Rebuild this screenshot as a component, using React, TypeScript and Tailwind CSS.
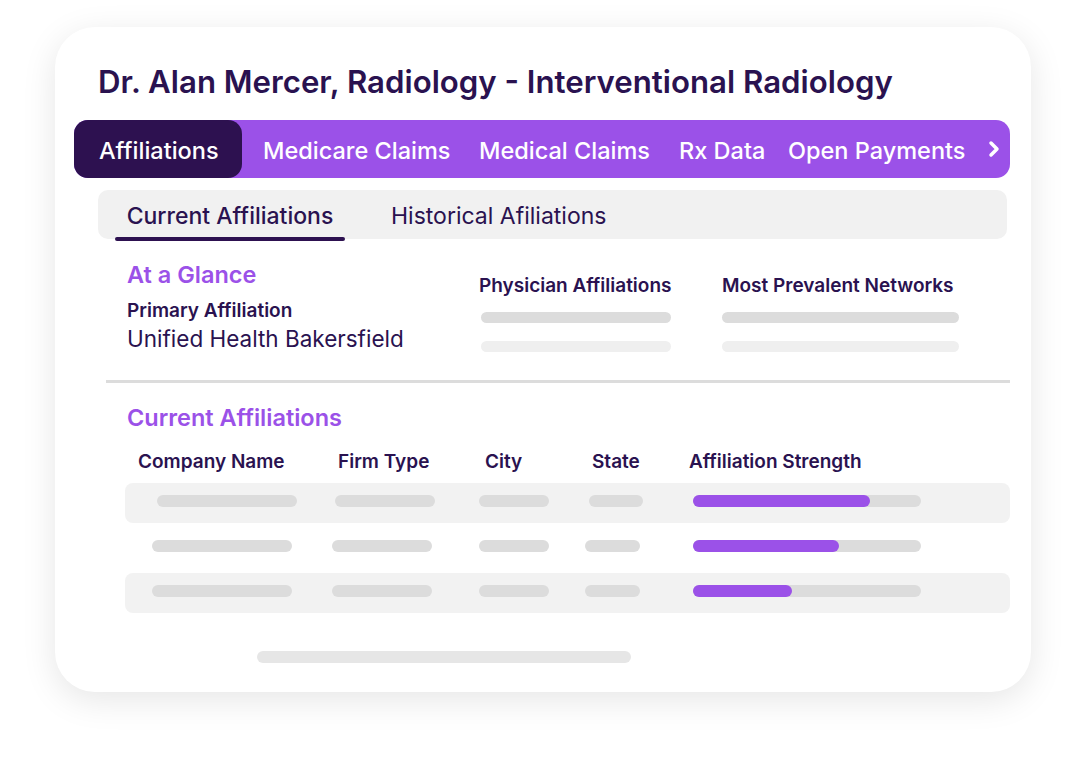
import { ChevronRight } from 'lucide-react';

const font = { fontFamily: 'Inter, "Noto Sans", sans-serif' };

const Bar = ({ w, light }: { w: number; light?: boolean }) => (
  <div className={`h-[11px] rounded-full ${light ? 'bg-[#efefef]' : 'bg-[#dcdcdc]'}`} style={{ width: w }} />
);

const rows = [
  { shade: true, company: [32, 140], firm: [210, 100], city: [354, 70], state: [464, 54], fill: 177 },
  { shade: false, company: [27, 140], firm: [207, 100], city: [354, 70], state: [460, 55], fill: 146 },
  { shade: true, company: [27, 140], firm: [207, 100], city: [354, 70], state: [460, 55], fill: 99 },
];

const App = () => {
  return (
    <div className="min-h-screen bg-white pt-[27px] pl-[55px]" style={font}>
      {/* Card */}
      <div className="w-[976px] h-[665px] bg-white rounded-[40px] shadow-[0_8px_34px_rgba(0,0,0,0.1)] pt-[35px]">
        <h1 className="ml-[43px] text-[31.2px] leading-[40px] font-semibold text-[#2a1250]">
          Dr. Alan Mercer, Radiology - Interventional Radiology
        </h1>

        {/* Main tabs */}
        <div className="ml-[19px] mt-[18px] w-[936px] h-[58px] bg-[#9b51e8] rounded-[14px] flex items-center text-white text-[23.5px] font-medium">
          <div className="h-full w-[168px] bg-[#2d1150] rounded-[14px] flex items-center pl-[25px] pt-[3px]">Affiliations</div>
          <span className="ml-[21px] w-[216px] pt-[3px]">Medicare Claims</span>
          <span className="w-[200px] pt-[3px]">Medical Claims</span>
          <span className="w-[109px] pt-[3px]">Rx Data</span>
          <span className="w-[194px] whitespace-nowrap pt-[3px]">Open Payments</span>
          <ChevronRight className="w-[24px] h-[24px]" strokeWidth={3.5} />
        </div>

        {/* Sub tabs */}
        <div className="ml-[43px] mt-[12px] w-[909px] h-[49px] bg-[#f1f1f1] rounded-[10px] flex text-[23px] text-[#2a1250]">
          <div className="relative ml-[17px] w-[230px] flex items-center justify-center font-medium whitespace-nowrap pt-[4px]">
            Current Affiliations
            <div className="absolute left-0 right-0 -bottom-[2px] h-[4px] rounded-full bg-[#2d1150]" />
          </div>
          <div className="ml-[46px] flex items-center whitespace-nowrap pt-[4px]">Historical Afiliations</div>
        </div>

        {/* At a glance */}
        <div className="flex h-[141px]">
          <div className="ml-[72px] w-[352px] pt-[22px] text-[#2a1250]">
            <div className="text-[23.5px] leading-[28px] font-semibold text-[#9b51e8]">At a Glance</div>
            <div className="mt-[11px] text-[19px] leading-[22px] font-semibold">Primary Affiliation</div>
            <div className="mt-[3px] text-[22.5px] leading-[28px]">Unified Health Bakersfield</div>
          </div>
          <div className="w-[242px] pt-[36px] pl-[2px]">
            <div className="text-[19px] leading-[22px] font-semibold text-[#2a1250] -ml-[2px] whitespace-nowrap">Physician Affiliations</div>
            <div className="mt-[15px]"><Bar w={190} /></div>
            <div className="mt-[18px]"><Bar w={190} light /></div>
          </div>
          <div className="pt-[36px] pl-[1px]">
            <div className="text-[19px] leading-[22px] font-semibold text-[#2a1250] whitespace-nowrap">Most Prevalent Networks</div>
            <div className="mt-[15px]"><Bar w={237} /></div>
            <div className="mt-[18px]"><Bar w={237} light /></div>
          </div>
        </div>

        <div className="ml-[51px] w-[904px] h-[3px] bg-[#dcdcdc]" />

        {/* Current affiliations */}
        <div className="ml-[72px] mt-[21px] text-[23.5px] leading-[28px] font-semibold text-[#9b51e8]">Current Affiliations</div>

        <div className="ml-[70px] mt-[15px] w-[885px]">
          <div className="relative h-[28px] text-[19px] leading-[30px] font-semibold text-[#2a1250] whitespace-nowrap">
            <span className="absolute left-[13px] top-0">Company Name</span>
            <span className="absolute left-[213px] top-0">Firm Type</span>
            <span className="absolute left-[360px] top-0">City</span>
            <span className="absolute left-[467px] top-0">State</span>
            <span className="absolute left-[564px] top-0">Affiliation Strength</span>
          </div>
          <div className="mt-[8px] flex flex-col gap-[5px]">
            {rows.map((r, i) => (
              <div key={i} className={`relative h-[40px] rounded-[8px] ${r.shade ? 'bg-[#f2f2f2]' : ''}`}>
                {[r.company, r.firm, r.city, r.state].map(([l, w], j) => (
                  <div key={j} className="absolute top-[12px] h-[12px] rounded-full bg-[#dcdcdc]" style={{ left: l, width: w }} />
                ))}
                <div className="absolute top-[12px] left-[568px] w-[228px] h-[12px] rounded-full bg-[#dcdcdc]">
                  <div className="h-full rounded-full bg-[#9b51e8]" style={{ width: r.fill }} />
                </div>
              </div>
            ))}
          </div>
        </div>

        <div className="ml-[202px] mt-[38px] w-[374px] h-[12px] rounded-full bg-[#e6e6e6]" />
      </div>
    </div>
  );
};

export default App;
